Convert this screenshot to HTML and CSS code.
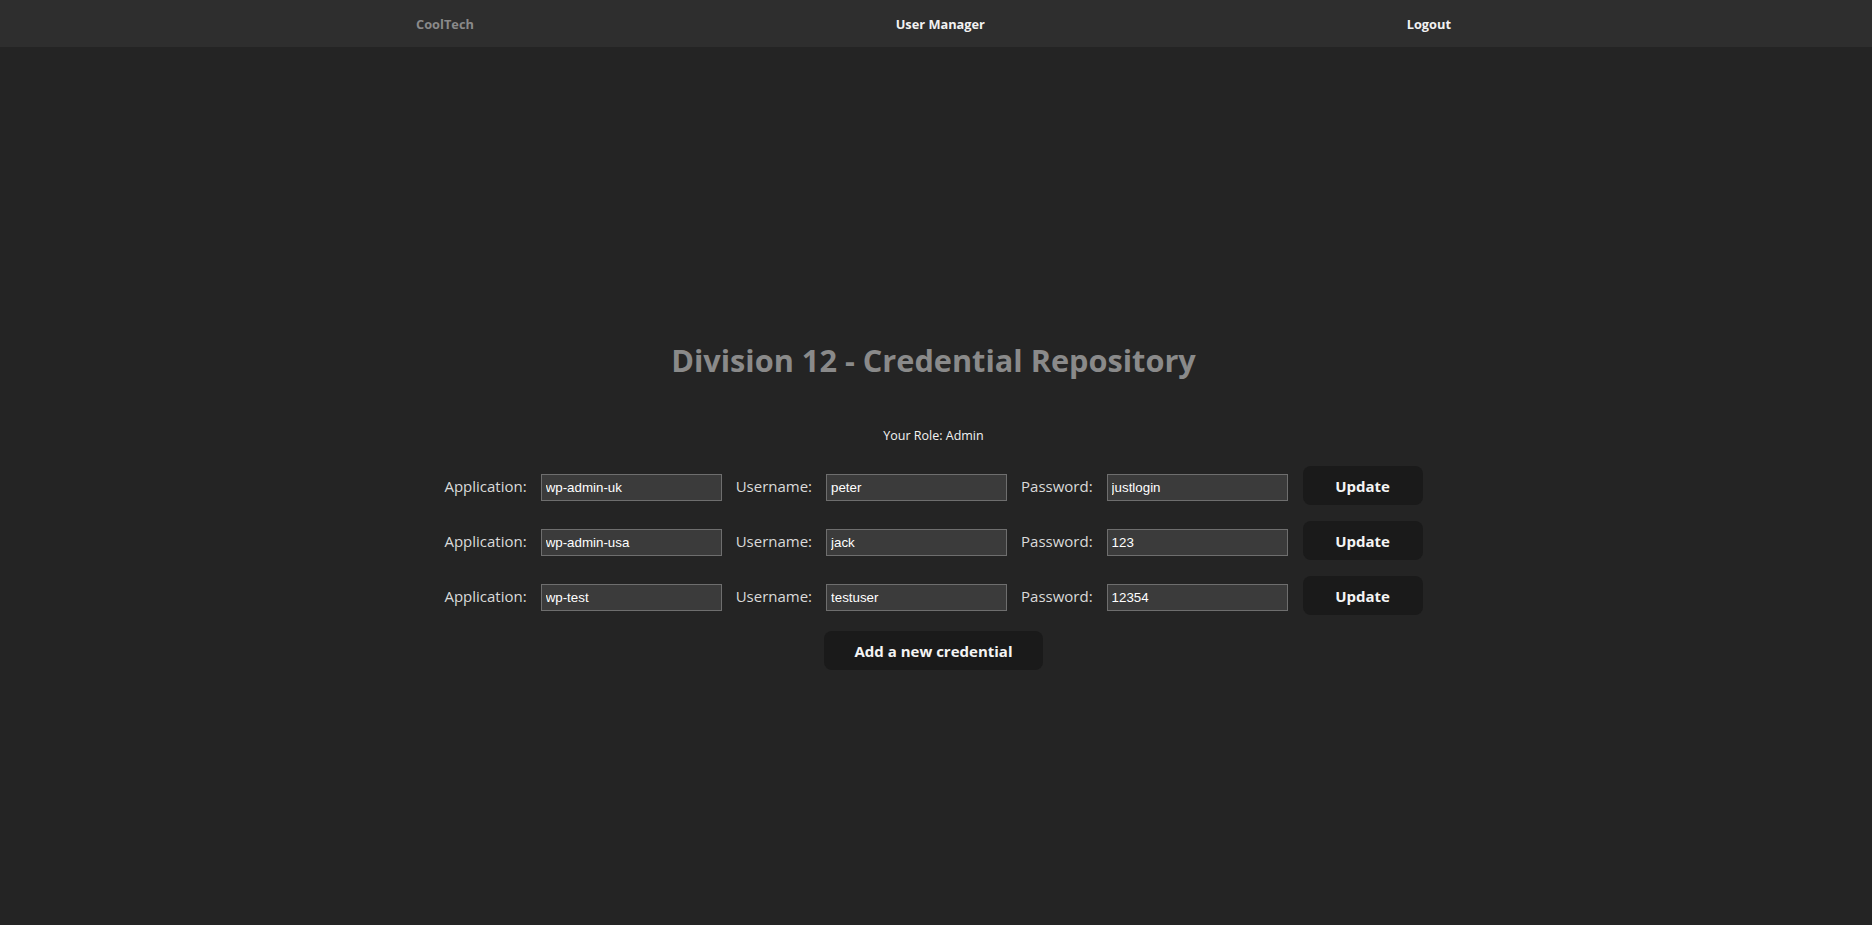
FILE: index.html
```html
<!DOCTYPE html>
<html lang="en">
<head>
<meta charset="utf-8">
<title>Credential Repository</title>
<link rel="stylesheet" href="styles.css">
</head>
<body>
<nav class="nav">
  <span class="nav-brand">CoolTech</span>
  <span class="nav-link">User Manager</span>
  <span class="nav-link">Logout</span>
</nav>
<main class="main">
  <h1 class="title">Division 12 - Credential Repository</h1>
  <p class="role">Your Role: Admin</p>
  <div class="list">
    <div class="row">
      <label class="label">Application:</label>
      <input class="field" type="text" value="wp-admin-uk">
      <label class="label">Username:</label>
      <input class="field" type="text" value="peter">
      <label class="label">Password:</label>
      <input class="field" type="text" value="justlogin">
      <button class="btn btn-update">Update</button>
    </div>
    <div class="row">
      <label class="label">Application:</label>
      <input class="field" type="text" value="wp-admin-usa">
      <label class="label">Username:</label>
      <input class="field" type="text" value="jack">
      <label class="label">Password:</label>
      <input class="field" type="text" value="123">
      <button class="btn btn-update">Update</button>
    </div>
    <div class="row">
      <label class="label">Application:</label>
      <input class="field" type="text" value="wp-test">
      <label class="label">Username:</label>
      <input class="field" type="text" value="testuser">
      <label class="label">Password:</label>
      <input class="field" type="text" value="12354">
      <button class="btn btn-update">Update</button>
    </div>
    <button class="btn btn-add">Add a new credential</button>
  </div>
</main>
</body>
</html>
```
FILE: styles.css
```css
html, body {
  margin: 0;
  padding: 0;
}
body {
  background: #242424;
  color: rgba(255, 255, 255, 0.87);
  font-family: "Open Sans", "Noto Sans", sans-serif;
  min-height: 925px;
}
.nav {
  height: 47px;
  background: #2e2e2e;
  display: flex;
  align-items: center;
  justify-content: space-between;
  padding: 0 421px 0 416px;
  font-size: 12.8px;
  font-weight: 700;
}
.nav-brand {
  color: #8a8a8a;
}
.nav-link {
  color: #f2f2f2;
}
.main {
  display: flex;
  flex-direction: column;
  align-items: center;
  padding-top: 293px;
  padding-right: 5px;
}
.title {
  margin: 0;
  font-size: 30.7px;
  line-height: 40px;
  font-weight: 700;
  color: #8a8a8a;
}
.role {
  margin: 46px 0 0;
  font-size: 12.5px;
  line-height: 20px;
  color: #f2f2f2;
}
.list {
  margin-top: 20px;
  display: flex;
  flex-direction: column;
  align-items: center;
  gap: 16px;
}
.row {
  display: flex;
  align-items: center;
  gap: 14px;
  height: 39px;
}
.label {
  font-size: 15px;
  line-height: 24px;
  color: #dadada;
}
.field {
  box-sizing: border-box;
  width: 181px;
  height: 27px;
  margin-top: 3px;
  padding: 1px 4px;
  background: #3b3b3b;
  border: 1px solid #6e6e6e;
  border-radius: 0;
  color: #ffffff;
  font-family: "Liberation Sans", Arial, sans-serif;
  font-size: 13.33px;
  outline: none;
}
.btn {
  box-sizing: border-box;
  height: 39px;
  border: 1px solid transparent;
  border-radius: 8px;
  background: #1a1a1a;
  color: #f4f4f4;
  font-family: "Open Sans", "Noto Sans", sans-serif;
  font-size: 15px;
  font-weight: 700;
  cursor: pointer;
}
.btn-update {
  width: 120px;
  margin-left: 1px;
}
.btn-add {
  padding: 0 30px;
}
```
